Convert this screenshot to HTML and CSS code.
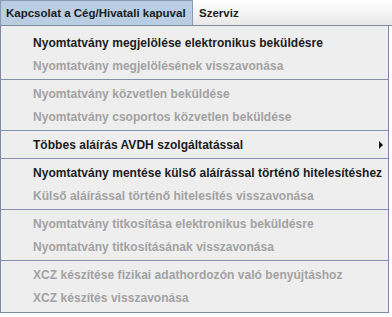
FILE: index.html
```html
<!DOCTYPE html>
<html>
<head>
<meta charset="utf-8">
<link rel="stylesheet" href="styles.css">
</head>
<body>
<div class="menubar">
  <div class="menu active">Kapcsolat a Cég/Hivatali kapuval</div>
  <div class="menu">Szerviz</div>
</div>
<div class="popup">
  <div class="item">Nyomtatvány megjelölése elektronikus beküldésre</div>
  <div class="item disabled">Nyomtatvány megjelölésének visszavonása</div>
  <div class="sep"></div>
  <div class="item disabled">Nyomtatvány közvetlen beküldése</div>
  <div class="item disabled">Nyomtatvány csoportos közvetlen beküldése</div>
  <div class="sep"></div>
  <div class="item submenu">Többes aláírás AVDH szolgáltatással<span class="arrow"></span></div>
  <div class="sep"></div>
  <div class="item">Nyomtatvány mentése külső aláírással történő hitelesítéshez</div>
  <div class="item disabled">Külső aláírással történő hitelesítés visszavonása</div>
  <div class="sep"></div>
  <div class="item disabled">Nyomtatvány titkosítása elektronikus beküldésre</div>
  <div class="item disabled">Nyomtatvány titkosításának visszavonása</div>
  <div class="sep"></div>
  <div class="item disabled">XCZ készítése fizikai adathordozón való benyújtáshoz</div>
  <div class="item disabled">XCZ készítés visszavonása</div>
</div>
</body>
</html>
```
FILE: styles.css
```css
html, body {
  margin: 0;
  padding: 0;
  background: #ffffff;
}
body {
  font-family: "Liberation Sans", Arial, sans-serif;
  font-size: 12px;
  font-weight: bold;
  color: #1c1c1c;
}
.menubar {
  display: flex;
  height: 26px;
  background: linear-gradient(#ffffff, #e8e8e8);
  border-bottom: 1px solid #7f8aa3;
  box-sizing: border-box;
}
.menu {
  padding: 0 6px;
  display: flex;
  align-items: center;
  height: 25px;
  font-size: 11.5px;
  color: #1c1c1c;
}
.menu.active {
  width: 193px;
  background: #b9cde3;
  border: 1px solid #8a9bb6;
  border-bottom: none;
  box-sizing: border-box;
  height: 25px;
  padding: 0 5px;
}
.popup {
  width: 389px;
  box-sizing: border-box;
  border: 1px solid #7c89a6;
  border-top: none;
  background: #eeeeee;
  padding: 5px 0 3px;
}
.item {
  height: 23px;
  display: flex;
  align-items: center;
  padding-left: 32px;
  padding-right: 5px;
  white-space: nowrap;
  letter-spacing: 0.04px;
}
.item.disabled {
  color: #a2a2a2;
}
.submenu {
  justify-content: space-between;
}
.arrow {
  width: 0;
  height: 0;
  border-top: 4px solid transparent;
  border-bottom: 4px solid transparent;
  border-left: 4px solid #111111;
}
.sep {
  height: 5px;
  display: flex;
  flex-direction: column;
  justify-content: center;
}
.sep::before {
  content: "";
  display: block;
  height: 1px;
  background: #8590aa;
}
```
